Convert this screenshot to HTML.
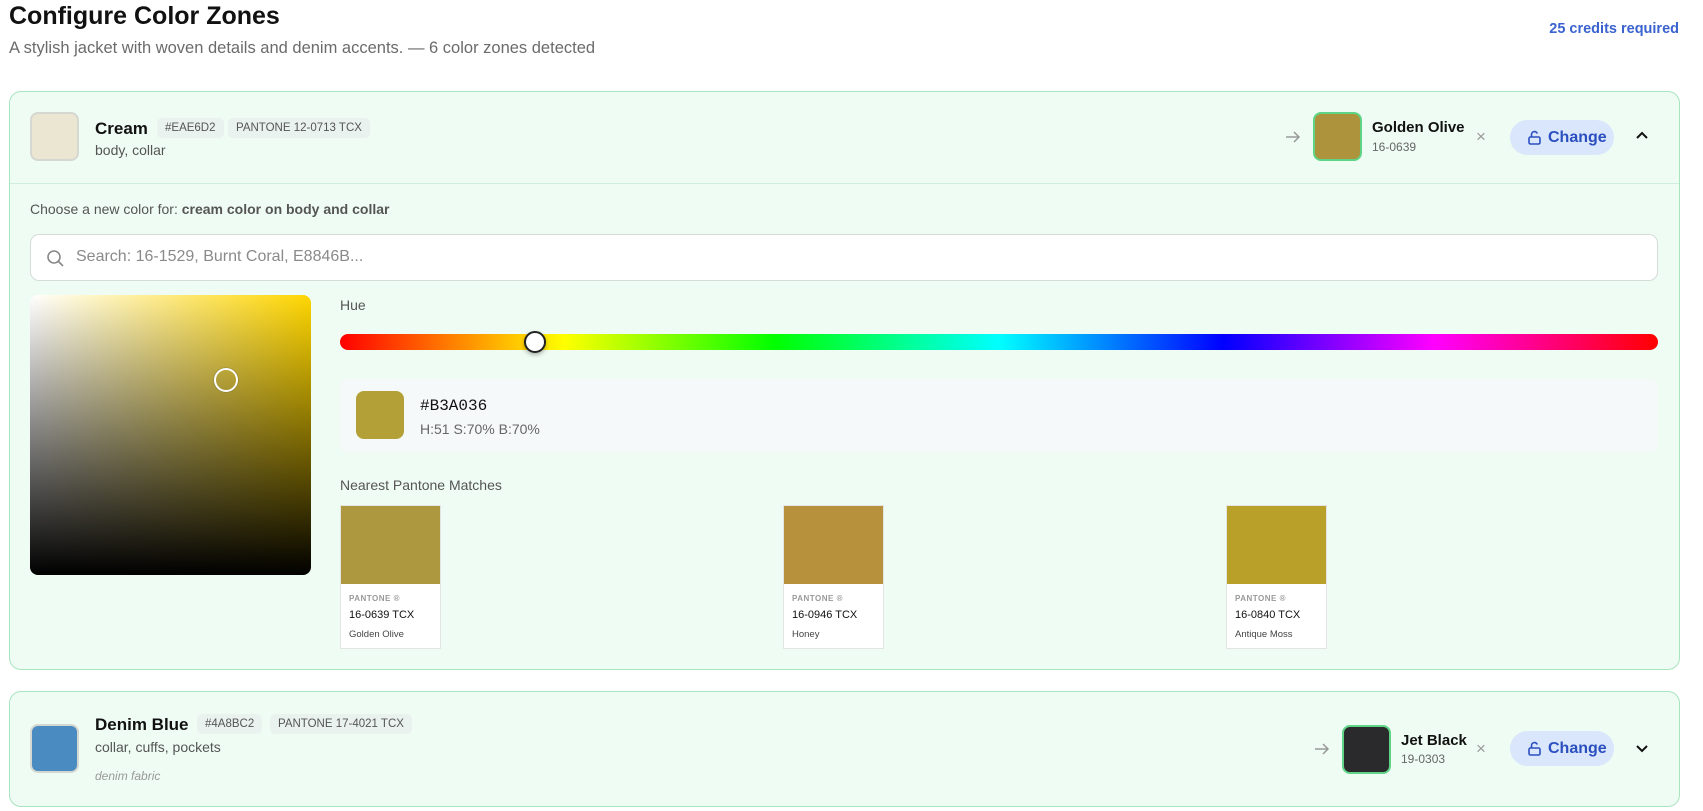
<!DOCTYPE html>
<html><head><meta charset="utf-8"><style>
*{box-sizing:border-box;margin:0;padding:0}
body{width:1703px;height:811px;overflow:hidden;background:#fff;font-family:"Liberation Sans",sans-serif;color:#111;position:relative}
.a{position:absolute}
.card{position:absolute;left:9px;width:1671px;background:#effcf3;border:1px solid #a8e4be;border-radius:12px}
.tag{position:absolute;background:#eaf2ef;color:#555;font-size:11.5px;padding:4px 8px;border-radius:5px}
.sw{position:absolute;border-radius:8px}
.btn{position:absolute;left:1510px;width:104px;height:35px;border-radius:18px;background:#d9e6fb;color:#2c4fc0;font-size:16px;font-weight:bold}
.pm{position:absolute;width:101px;height:144px;background:#fff;border:1px solid #e4e4e4}
.pm div.s{height:78px}
.pm .l{font-size:8px;color:#999;font-weight:bold;letter-spacing:.5px;margin:10px 0 0 8px}
.pm .c{font-size:11px;color:#111;margin:6px 0 0 8px}
.pm .n{font-size:9.5px;color:#444;margin:8px 0 0 8px}
</style></head><body>
<div class="a" style="left:9px;top:0;font-size:25px;font-weight:bold;line-height:32px">Configure Color Zones</div>
<div class="a" style="left:9px;top:39px;font-size:16.5px;color:#6b6b6b">A stylish jacket with woven details and denim accents. — 6 color zones detected</div>
<div class="a" style="right:24px;top:21px;font-size:14.5px;font-weight:bold;color:#3a63cf">25 credits required</div>

<div class="card" style="top:91px;height:579px">
 <div class="a" style="left:0;right:0;top:91px;border-top:1px solid #cfeedd"></div>
</div>
<div class="sw" style="left:30px;top:112px;width:49px;height:49px;background:#eae6d2;border:2px solid #d5d8d0"></div>
<div class="a" style="left:95px;top:119px;font-size:17px;font-weight:bold">Cream</div>
<div class="tag" style="left:157px;top:118px">#EAE6D2</div>
<div class="tag" style="left:228px;top:118px">PANTONE 12-0713 TCX</div>
<div class="a" style="left:95px;top:142px;font-size:14px;color:#555">body, collar</div>
<svg class="a" style="left:1285px;top:130px" width="16" height="14" viewBox="0 0 16 14" fill="none" stroke="#999" stroke-width="1.5"><path d="M1 7h13M9 2l5 5-5 5"/></svg>
<div class="sw" style="left:1313px;top:112px;width:49px;height:49px;background:#ad933c;border:2px solid #5fd486"></div>
<div class="a" style="left:1372px;top:119px;font-size:15px;font-weight:bold">Golden Olive</div>
<div class="a" style="left:1372px;top:140px;font-size:12px;color:#666">16-0639</div>
<div class="a" style="left:1476px;top:127px;font-size:17px;color:#999">×</div>
<div class="btn" style="top:120px"><svg class="a" style="left:17px;top:10px" width="15" height="15" viewBox="0 0 15 15" fill="none" stroke="#2c4fc0" stroke-width="1.6"><rect x="2" y="7" width="11" height="7" rx="1.5"/><path d="M4.5 7V4.5a3 3 0 0 1 5.8-1"/></svg><span class="a" style="left:38px;top:9px">Change</span></div>
<svg class="a" style="left:1635px;top:130px" width="14" height="10" viewBox="0 0 14 10" fill="none" stroke="#111" stroke-width="2"><path d="M2 8l5-5 5 5"/></svg>

<div class="a" style="left:30px;top:201px;font-size:14px;color:#555">Choose a new color for: <b style="color:#555">cream color on body and collar</b></div>
<div class="a" style="left:30px;top:234px;width:1628px;height:47px;background:#fff;border:1px solid #d5dbd8;border-radius:9px">
 <svg class="a" style="left:15px;top:14px" width="18" height="18" viewBox="0 0 18 18" fill="none" stroke="#888" stroke-width="1.6"><circle cx="8" cy="8" r="6"/><path d="M12.5 12.5L17 17"/></svg>
 <span class="a" style="left:45px;top:13px;font-size:16px;color:#8a8a8a">Search: 16-1529, Burnt Coral, E8846B...</span>
</div>
<div class="a" style="left:30px;top:295px;width:281px;height:280px;border-radius:8px;background:linear-gradient(to top,#000,rgba(0,0,0,0)),linear-gradient(to right,#fff,#ffd600)"></div>
<div class="a" style="left:214px;top:368px;width:24px;height:24px;border-radius:50%;border:2px solid #fff;box-shadow:0 0 1px #333"></div>
<div class="a" style="left:340px;top:297px;font-size:14px;color:#555">Hue</div>
<div class="a" style="left:340px;top:334px;width:1318px;height:16px;border-radius:8px;background:linear-gradient(to right,#f00,#ff0 17%,#0f0 33%,#0ff 50%,#00f 67%,#f0f 83%,#f00)"></div>
<div class="a" style="left:524px;top:331px;width:22px;height:22px;border-radius:50%;background:#fff;border:2px solid #222;box-shadow:0 2px 4px rgba(0,0,0,.3)"></div>
<div class="a" style="left:340px;top:379px;width:1318px;height:73px;background:#f6f9f9;border-radius:8px"></div>
<div class="sw" style="left:356px;top:391px;width:48px;height:48px;background:#b3a036"></div>
<div class="a" style="left:420px;top:397px;font-family:'Liberation Mono',monospace;font-size:16px">#B3A036</div>
<div class="a" style="left:420px;top:421px;font-size:14px;color:#666">H:51 S:70% B:70%</div>
<div class="a" style="left:340px;top:477px;font-size:14px;color:#555">Nearest Pantone Matches</div>
<div class="pm" style="left:340px;top:505px"><div class="s" style="background:#ad9840"></div><div class="l">PANTONE ®</div><div class="c">16-0639 TCX</div><div class="n">Golden Olive</div></div>
<div class="pm" style="left:783px;top:505px"><div class="s" style="background:#b8913c"></div><div class="l">PANTONE ®</div><div class="c">16-0946 TCX</div><div class="n">Honey</div></div>
<div class="pm" style="left:1226px;top:505px"><div class="s" style="background:#b9a028"></div><div class="l">PANTONE ®</div><div class="c">16-0840 TCX</div><div class="n">Antique Moss</div></div>

<div class="card" style="top:691px;height:116px"></div>
<div class="sw" style="left:30px;top:724px;width:49px;height:49px;background:#4a8bc2;border:2px solid #d5d8d0"></div>
<div class="a" style="left:95px;top:715px;font-size:17px;font-weight:bold">Denim Blue</div>
<div class="tag" style="left:197px;top:714px">#4A8BC2</div>
<div class="tag" style="left:270px;top:714px">PANTONE 17-4021 TCX</div>
<div class="a" style="left:95px;top:739px;font-size:14px;color:#555">collar, cuffs, pockets</div>
<div class="a" style="left:95px;top:769px;font-size:12px;color:#999;font-style:italic">denim fabric</div>
<svg class="a" style="left:1314px;top:742px" width="16" height="14" viewBox="0 0 16 14" fill="none" stroke="#999" stroke-width="1.5"><path d="M1 7h13M9 2l5 5-5 5"/></svg>
<div class="sw" style="left:1342px;top:725px;width:49px;height:49px;background:#2a2a2c;border:2px solid #5fd486"></div>
<div class="a" style="left:1401px;top:732px;font-size:15px;font-weight:bold">Jet Black</div>
<div class="a" style="left:1401px;top:752px;font-size:12px;color:#666">19-0303</div>
<div class="a" style="left:1476px;top:739px;font-size:17px;color:#999">×</div>
<div class="btn" style="top:731px"><svg class="a" style="left:17px;top:10px" width="15" height="15" viewBox="0 0 15 15" fill="none" stroke="#2c4fc0" stroke-width="1.6"><rect x="2" y="7" width="11" height="7" rx="1.5"/><path d="M4.5 7V4.5a3 3 0 0 1 5.8-1"/></svg><span class="a" style="left:38px;top:9px">Change</span></div>
<svg class="a" style="left:1635px;top:744px" width="14" height="10" viewBox="0 0 14 10" fill="none" stroke="#111" stroke-width="2"><path d="M2 2l5 5 5-5"/></svg>
</body></html>
